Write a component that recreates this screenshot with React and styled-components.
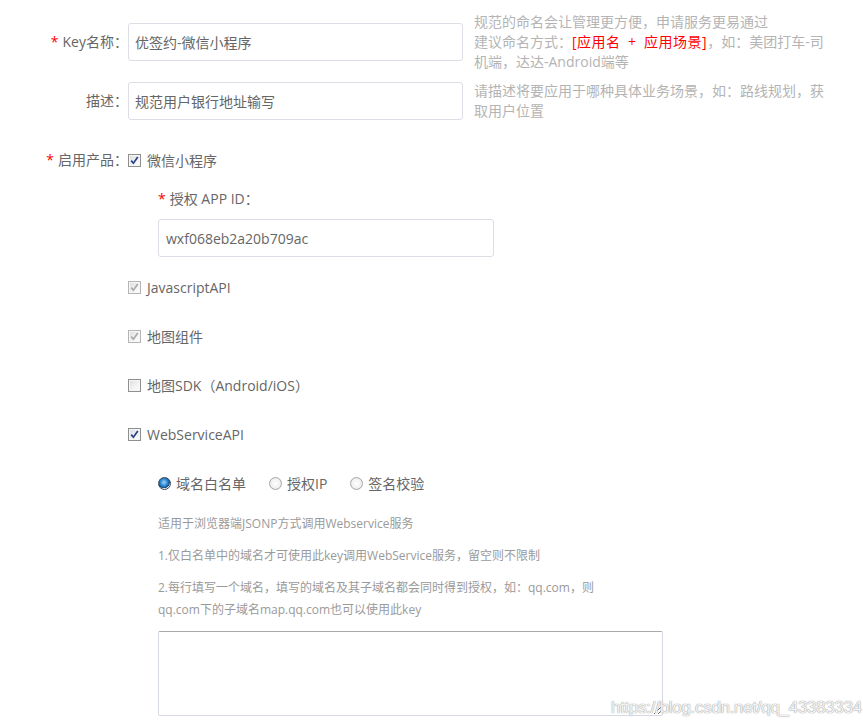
import React from "react";
import styled, { createGlobalStyle } from "styled-components";

const Global = createGlobalStyle`
  html, body { margin: 0; padding: 0; background: #fff; }
  body {
    font-family: "Open Sans", "Noto Sans CJK SC", sans-serif;
    font-size: 14px;
    color: #666;
  }
`;

const Page = styled.div`
  position: relative;
  width: 863px;
  height: 727px;
  overflow: hidden;
  padding-top: 12px;
  box-sizing: border-box;
`;

const Row = styled.div`
  display: flex;
  align-items: center;
  margin-top: ${(p) => p.$mt || 0}px;
  min-height: ${(p) => p.$h || 20}px;
`;

const Label = styled.div`
  width: 128px;
  flex: none;
  text-align: right;
  line-height: 20px;
  color: #666;
  white-space: nowrap;
`;

const Star = styled.span`
  color: #f00;
  margin-right: 4px;
`;

const TextInput = styled.input`
  width: ${(p) => p.$w || 335}px;
  height: 38px;
  box-sizing: border-box;
  border: 1px solid #dcdee5;
  border-radius: 3px;
  padding: 0 ${(p) => p.$pad || 6}px;
  font: inherit;
  font-size: 14px;
  color: #666;
  outline: none;
  background: #fff;
`;

const Hint = styled.div`
  margin-left: 11px;
  width: 352px;
  line-height: 20px;
  color: #b4b4b4;
`;

const Red = styled.span`
  color: #f00;
  letter-spacing: 0.5px;
`;

const Indent = styled.div`
  padding-left: ${(p) => p.$pl || 0}px;
  margin-top: ${(p) => p.$mt || 0}px;
`;

const SubLabel = styled.div`
  line-height: 20px;
  color: #666;
`;

const CheckRow = styled.label`
  display: flex;
  align-items: center;
  height: 20px;
  margin-top: ${(p) => p.$mt || 0}px;
  color: #666;
`;

const Box = styled.span`
  width: 11px;
  height: 11px;
  flex: none;
  border: 1px solid ${(p) => (p.$disabled ? "#b5b5b5" : "#8e8f8f")};
  background: linear-gradient(135deg, #dcdcdc 0%, #f4f4f4 60%, #fff 100%);
  box-shadow: inset 0 0 0 1px #f6f6f6;
  display: inline-flex;
  align-items: center;
  justify-content: center;
  margin-right: 6px;
`;

const RadioGroup = styled.div`
  display: flex;
  align-items: center;
  height: 20px;
  margin-top: 29px;
`;

const RadioItem = styled.label`
  display: flex;
  align-items: center;
  margin-right: 23px;
  color: #666;
`;

const RadioDot = styled.span`
  width: 11px;
  height: 11px;
  border-radius: 50%;
  flex: none;
  border: 1px solid ${(p) => (p.$on ? "#3b4a5a" : "#a8a8a8")};
  background: ${(p) =>
    p.$on
      ? "radial-gradient(circle at 45% 40%, #9fd6ff 0%, #2a86d0 40%, #164d86 62%, #e8e8e8 68%, #f8f8f8 100%)"
      : "radial-gradient(circle at 50% 50%, #ffffff 0%, #f2f2f2 55%, #d6d6d6 100%)"};
  margin-right: 5px;
`;

const Note = styled.p`
  margin: ${(p) => p.$mt || 10}px 0 0 0;
  width: 460px;
  font-size: 12px;
  line-height: 22px;
  color: #9a9a9a;
`;

const Area = styled.textarea`
  display: block;
  margin-top: 10px;
  width: 505px;
  height: 85px;
  box-sizing: border-box;
  border: 1px solid #d5d9e2;
  border-top-color: #a9a9a9;
  border-radius: 2px;
  outline: none;
  resize: both;
  font: inherit;
`;

const Watermark = styled.div`
  position: absolute;
  left: 611px;
  top: 698px;
  font-family: "Liberation Sans Narrow", "Liberation Sans", sans-serif;
  font-size: 17px;
  letter-spacing: -0.3px;
  color: rgba(255, 255, 255, 0.9);
  text-shadow: 0 0 1px #9a9a9a, 0 0 1px #9a9a9a;
  white-space: nowrap;
`;

function Check({ checked, disabled }) {
  return (
    <Box $disabled={disabled}>
      {checked && (
        <svg width="9" height="9" viewBox="0 0 9 9">
          <path
            d="M1.2 4.6 L3.4 7.2 L7.8 1"
            fill="none"
            stroke={disabled ? "#a9a9a9" : "#24408f"}
            strokeWidth="1.7"
          />
        </svg>
      )}
    </Box>
  );
}

function Radio({ on, children }) {
  return (
    <RadioItem>
      <RadioDot $on={on} />
      {children}
    </RadioItem>
  );
}

export default function App() {
  return (
    <Page>
      <Global />
      <Row $h={60}>
        <Label>
          <Star>*</Star>Key名称：
        </Label>
        <TextInput defaultValue="优签约-微信小程序" />
        <Hint>
          规范的命名会让管理更方便，申请服务更易通过
          <br />
          建议命名方式：<Red>[应用名{"\u2002"}+{"\u2002"}应用场景]</Red>，如：美团打车-司机端，达达-Android端等
        </Hint>
      </Row>
      <Row $mt={9} $h={40}>
        <Label>描述：</Label>
        <TextInput defaultValue="规范用户银行地址输写" />
        <Hint>请描述将要应用于哪种具体业务场景，如：路线规划，获取用户位置</Hint>
      </Row>
      <Row $mt={29}>
        <Label>
          <Star>*</Star>启用产品：
        </Label>
        <CheckRow>
          <Check checked />
          微信小程序
        </CheckRow>
      </Row>
      <Indent $pl={158} $mt={19}>
        <SubLabel>
          <Star>*</Star>授权 APP ID：
        </SubLabel>
        <Indent $mt={10}>
          <TextInput $w={336} $pad={7} defaultValue="wxf068eb2a20b709ac" />
        </Indent>
      </Indent>
      <Indent $pl={128}>
        <CheckRow $mt={20}>
          <Check checked disabled />
          JavascriptAPI
        </CheckRow>
        <CheckRow $mt={29}>
          <Check checked disabled />
          地图组件
        </CheckRow>
        <CheckRow $mt={29}>
          <Check />
          地图SDK（Android/iOS）
        </CheckRow>
        <CheckRow $mt={29}>
          <Check checked />
          WebServiceAPI
        </CheckRow>
      </Indent>
      <Indent $pl={158}>
        <RadioGroup>
          <Radio on>域名白名单</Radio>
          <Radio>授权IP</Radio>
          <Radio>签名校验</Radio>
        </RadioGroup>
        <Note $mt={20}>适用于浏览器端JSONP方式调用Webservice服务</Note>
        <Note>1.仅白名单中的域名才可使用此key调用WebService服务，留空则不限制</Note>
        <Note>
          2.每行填写一个域名，填写的域名及其子域名都会同时得到授权，如：qq.com，则qq.com下的子域名map.qq.com也可以使用此key
        </Note>
        <Area />
      </Indent>
      <Watermark>https://blog.csdn.net/qq_43383334</Watermark>
    </Page>
  );
}
